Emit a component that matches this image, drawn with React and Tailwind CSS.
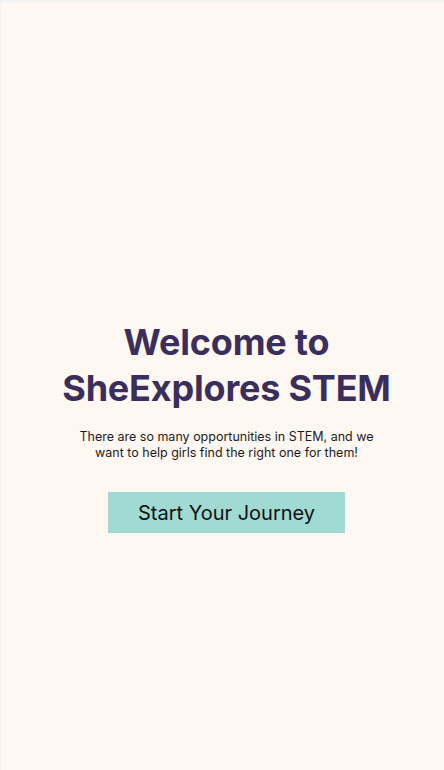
import React from "react";

const App = () => {
  return (
    <div className="min-h-screen w-full bg-[#f4f3f3] pt-[3px] pl-[1px]">
      <div className="h-[767px] bg-[#fff7f1] flex flex-col items-center pl-[8px] font-['Inter',sans-serif]">
        <div className="pt-[316px] flex flex-col items-center text-center">
          <h1 className="text-[36px] leading-[46px] font-bold text-[#3a2f5c] tracking-[-0.2px]">
            Welcome to
            <br />
            SheExplores STEM
          </h1>
          <p className="mt-[18px] text-[12.5px] leading-[16px] text-[#1c1c1c] w-[300px]">
            There are so many opportunities in STEM, and we want to help girls find the right one for them!
          </p>
          <button className="mt-[31px] w-[237px] h-[41px] bg-[#a0dad3] text-[20px] text-[#111] font-normal">
            Start Your Journey
          </button>
        </div>
      </div>
    </div>
  );
};

export default App;
